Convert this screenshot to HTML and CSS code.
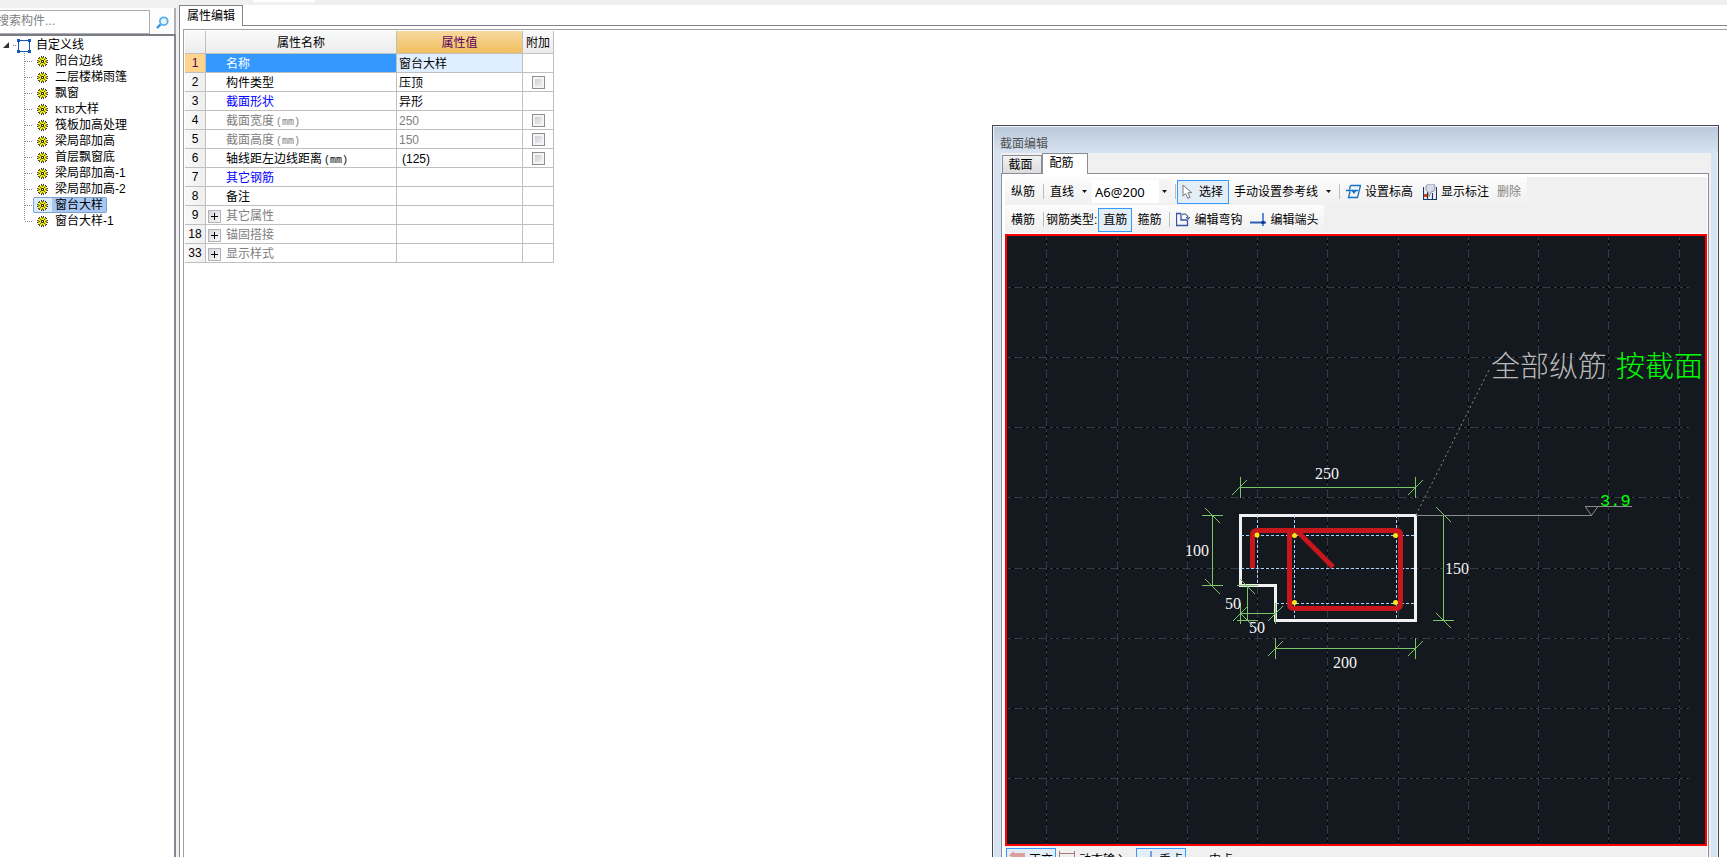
FILE: index.html
```
<!DOCTYPE html>
<html lang="zh-CN">
<head>
<meta charset="utf-8">
<title>属性编辑</title>
<link rel="stylesheet" href="styles.css">
</head>
<body>
<svg class="defs" aria-hidden="true">
  <symbol id="gear" viewBox="0 0 11 11">
    <path d="M4 0h1v1h1V0h1v2h1V1h1v1h1v1H9v1h2v1h-1v1h1v1H9v1h1v1H9v1H8V9H7v2H6v-1H5v1H4V9H3v1H2V9H1V8h1V7H0V6h1V5H0V4h2V3H1V2h1V1h1v1h1z" fill="#333"/>
    <circle cx="5.5" cy="5.5" r="4.100" fill="#ffef00"/>
    <path d="M5 2h1v1H5zM5 8h1v1H5zM2 5h1v1H2zM8 5h1v1H8zM3 3h1v1H3zM7 3h1v1H7zM3 7h1v1H3zM7 7h1v1H7z" fill="#6d6400"/>
    <path d="M4 4h3v3H4z" fill="#333"/><path d="M5 5h1v1H5z" fill="#fff"/>
  </symbol>
  <symbol id="down" viewBox="0 0 5 3"><path d="M0 0h5L2.5 3z" fill="#111"/></symbol>
</svg>
<main class="app">
  <div class="strip"><span class="strip-field"></span></div>
  <aside class="side">
    <form class="search">
      <input class="search-box" type="text" placeholder="搜索构件..." aria-label="搜索构件">
      <button class="search-btn" type="button" aria-label="搜索">
        <svg width="13" height="13" viewBox="0 0 13 13"><path d="M1 12l4-4" stroke="#3d93dc" stroke-width="2.4"/><circle cx="7.8" cy="5.2" r="3.9" fill="#e4f5ff" stroke="#58aeea" stroke-width="1.8"/></svg>
      </button>
    </form>
    <div class="tree">
      <div class="root">
        <svg width="32" height="16" viewBox="0 0 32 16"><path d="M3 11h6V5z" fill="#333"/><path d="M13 8.5h4" stroke="#888" stroke-dasharray="1 1"/><rect x="18.500" y="3.500" width="11" height="11" fill="#fff" stroke="#1757b5"/><path d="M17 2h3v3h-3zM28 2h3v3h-3zM17 13h3v3h-3zM28 13h3v3h-3z" fill="#1757b5"/></svg>
        <span>自定义线</span>
      </div>
      <ul class="branch">
        <li><svg class="gear"><use href="#gear"/></svg><span class="leaf">阳台边线</span></li>
        <li><svg class="gear"><use href="#gear"/></svg><span class="leaf">二层楼梯雨篷</span></li>
        <li><svg class="gear"><use href="#gear"/></svg><span class="leaf">飘窗</span></li>
        <li><svg class="gear"><use href="#gear"/></svg><span class="leaf"><span class="latin">KTB</span>大样</span></li>
        <li><svg class="gear"><use href="#gear"/></svg><span class="leaf">筏板加高处理</span></li>
        <li><svg class="gear"><use href="#gear"/></svg><span class="leaf">梁局部加高</span></li>
        <li><svg class="gear"><use href="#gear"/></svg><span class="leaf">首层飘窗底</span></li>
        <li><svg class="gear"><use href="#gear"/></svg><span class="leaf">梁局部加高-1</span></li>
        <li><svg class="gear"><use href="#gear"/></svg><span class="leaf">梁局部加高-2</span></li>
        <li><span class="picked"><svg class="gear"><use href="#gear"/></svg><span class="leaf">窗台大样</span></span></li>
        <li><svg class="gear"><use href="#gear"/></svg><span class="leaf">窗台大样-1</span></li>
      </ul>
    </div>
  </aside>
  <section class="props">
    <div class="tabs"><button class="tab" type="button">属性编辑</button></div>
    <div class="frame">
      <table class="grid">
        <colgroup><col class="c-num"><col class="c-name"><col class="c-value"><col class="c-extra"></colgroup>
        <thead><tr><th></th><th>属性名称</th><th class="hot">属性值</th><th>附加</th></tr></thead>
        <tbody>
          <tr class="current"><th>1</th><td>名称</td><td>窗台大样</td><td></td></tr>
          <tr><th>2</th><td>构件类型</td><td>压顶</td><td><input type="checkbox" aria-label="附加 构件类型"></td></tr>
          <tr class="key"><th>3</th><td>截面形状</td><td>异形</td><td></td></tr>
          <tr class="dim"><th>4</th><td>截面宽度<span class="unit">(mm)</span></td><td>250</td><td><input type="checkbox" aria-label="附加 截面宽度"></td></tr>
          <tr class="dim"><th>5</th><td>截面高度<span class="unit">(mm)</span></td><td>150</td><td><input type="checkbox" aria-label="附加 截面高度"></td></tr>
          <tr><th>6</th><td>轴线距左边线距离<span class="unit">(mm)</span></td><td class="inset">(125)</td><td><input type="checkbox" aria-label="附加 轴线距左边线距离"></td></tr>
          <tr class="key"><th>7</th><td>其它钢筋</td><td></td><td></td></tr>
          <tr><th>8</th><td>备注</td><td></td><td></td></tr>
          <tr class="dim group"><th>9</th><td><button class="plus" type="button" aria-label="展开 其它属性"></button>其它属性</td><td></td><td></td></tr>
          <tr class="dim group"><th>18</th><td><button class="plus" type="button" aria-label="展开 锚固搭接"></button>锚固搭接</td><td></td><td></td></tr>
          <tr class="dim group"><th>33</th><td><button class="plus" type="button" aria-label="展开 显示样式"></button>显示样式</td><td></td><td></td></tr>
        </tbody>
      </table>
    </div>
  </section>

  <section class="window">
    <h2 class="title">截面编辑</h2>
    <div class="client">
      <div class="wtabs"><button class="wtab" type="button">截面</button><button class="wtab on" type="button">配筋</button></div>
      <div class="pane">
        <div class="bars">
          <div class="bar">
            <button class="tool" type="button">纵筋</button><i class="sep"></i>
            <button class="tool drop" type="button">直线<svg class="down"><use href="#down"/></svg></button>
            <span class="combo"><select aria-label="钢筋信息"><option>A6@200</option></select><svg class="down"><use href="#down"/></svg></span><i class="sep"></i>
            <button class="tool on pick" type="button"><svg width="11" height="16" viewBox="0 0 11 16"><path d="M1 1v11l2.700-2.500 2 4.800 2.300-1-2-4.600h3.700z" fill="#fff" stroke="#777"/></svg>选择</button>
            <button class="tool drop" type="button">手动设置参考线<svg class="down"><use href="#down"/></svg></button><i class="sep"></i>
            <button class="tool" type="button"><svg width="15" height="15" viewBox="0 0 15 15"><path d="M4.500 1.500h10l-3 12h-9l1.500-6M4.500 1.500l-1 4M0 6.500h12" fill="none" stroke="#1272c4" stroke-width="1.300"/><path d="M5 6h6l-3 4z" fill="#1272c4"/></svg>设置标高</button>
            <button class="tool" type="button"><svg width="14" height="16" viewBox="0 0 14 16"><path d="M.5 3v12.500h4V6M13.500 3v12.500h-4V9M4.500 15.500h5" fill="none" stroke="#17386b" stroke-width="1.200"/><path d="M3 2l3-2h5l1 2-1 5-3 1-2 5-1-5-2-2z" fill="#d5dce8" stroke="#8b99b0"/><path d="M1 10h3v3H1z" fill="#e23c0c"/></svg>显示标注</button>
            <button class="tool" type="button" disabled>删除</button>
          </div>
          <div class="bar">
            <button class="tool" type="button">横筋</button><i class="sep"></i>
            <span class="caption">钢筋类型:</span>
            <button class="tool on" type="button">直筋</button>
            <button class="tool" type="button">箍筋</button><i class="sep"></i>
            <button class="tool" type="button"><svg width="14" height="15" viewBox="0 0 14 15"><path d="M5 1.500H.5v12h11V8M5 1.500V8h6" fill="none" stroke="#3556a4" stroke-width="1.300"/><path d="M6 2.500c3-1.500 6 0 6 4M10 5l2 2.500L14 5" fill="none" stroke="#223a7c"/></svg>编辑弯钩</button>
            <button class="tool tight" type="button"><svg width="16" height="15" viewBox="0 0 16 15"><path d="M0 10.500h16" stroke="#2f5cb0" stroke-width="2"/><path d="M13 1v13" stroke="#5b8ad8" stroke-width="2"/><path d="M11.500 9h3v3h-3z" fill="#123a94"/></svg>编辑端头</button>
          </div>
        </div>
        <div class="canvas">
          <svg role="img" aria-label="截面配筋图">
            <g transform="translate(-1007 -236)">
            <g class="base">
              <path d="M1046.500 237v607M1117.500 237v607M1187.500 237v607M1257.500 237v607M1327.500 237v607M1398.500 237v607M1468.500 237v607M1538.500 237v607M1608.500 237v607M1679.500 237v607"/>
              <path d="M1008 287.500h681M1008 357.500h681M1008 427.500h681M1008 497.500h681M1008 568.500h681M1008 638.500h681M1008 708.500h681M1008 778.500h681"/>
            </g>
            <g class="dash">
              <path class="vert" d="M1046.500 237v607M1117.500 237v607M1187.500 237v607M1257.500 237v607M1327.500 237v607M1398.500 237v607M1468.500 237v607M1538.500 237v607M1608.500 237v607M1679.500 237v607"/>
              <path class="horz" d="M1008 287.500h681M1008 357.500h681M1008 427.500h681M1008 497.500h681M1008 568.500h681M1008 638.500h681M1008 708.500h681M1008 778.500h681"/>
            </g>
            <path class="outline" d="M1240.500 515.500h175v105h-140v-35h-35z"/>
            <g class="axes">
              <path d="M1257.500 515v70M1294.500 515v105M1396.500 515v105M1241 535.500h174M1241 568.500h174M1276 603.500h139"/>
            </g>
            <path class="rebar" d="M1252.500 568V535q0-4.500 5-4.500H1396q4.500 0 4.500 4.500V604q0 4.500-4.500 4.500H1294q-4.500 0-4.500-4.500V531M1298 532l35 35"/>
            <g class="bars-dots">
              <circle cx="1257" cy="535" r="2.500"/><circle cx="1294.500" cy="535.500" r="2.500"/><circle cx="1395.500" cy="535.500" r="2.500"/><circle cx="1294.500" cy="602.500" r="2.500"/><circle cx="1395.500" cy="602.500" r="2.500"/>
            </g>
            <g class="measure">
              <path d="M1240.500 487.500h175M1240.500 477v21M1415.500 477v21M1232 495l15-15M1408 495l15-15"/>
              <path d="M1212.500 515.500v70M1202 515.500h21M1202 585.500h21M1205 508l15 15M1205 579l15 15"/>
              <path d="M1443.500 515.500v105M1433 620.500h21M1436 507l15 15M1436 613l15 15"/>
              <path d="M1275.500 648.500h140M1275.500 638v21M1415.500 638v21M1268 656l15-15M1408 656l15-15"/>
              <path d="M1247.500 585.500v35M1237 585.500h21M1237 620.500h21M1240 579l15 15M1240 613l15 15"/>
              <path d="M1240.500 613.500h35M1240.500 603v21M1275.500 603v21M1233 621l15-15M1268 621l15-15"/>
            </g>
            <g class="level">
              <path class="leader" d="M1416 515l74-147"/>
              <path d="M1416 515.500h176M1585 506.500h47M1585.500 507l6 8.500 6-8.500"/>
            </g>
            <g class="numbers">
              <text x="1315" y="479">250</text><text x="1185" y="556">100</text><text x="1445" y="574">150</text><text x="1225" y="609">50</text><text x="1249" y="633">50</text><text x="1333" y="668">200</text>
            </g>
            <text class="elev" x="1600" y="506">3.9</text>
            <text class="note" x="1491" y="377">全部纵筋</text>
            <text class="note green" x="1616" y="377">按截面</text>
            </g>
          </svg>
        </div>
        <div class="bar foot">
          <button class="tool on" type="button"><svg width="16" height="14" viewBox="0 0 16 14"><path d="M0 4l5-4v2h11v4H5v2z" fill="#dca0a0"/></svg>正交</button>
          <button class="tool" type="button"><svg width="16" height="14" viewBox="0 0 16 14"><path d="M.5 0v7M15.500 0v7M0 2.500h16" stroke="#a87878"/></svg>动态输入</button>
          <button class="tool on gap" type="button"><svg width="16" height="16" viewBox="0 0 16 16"><path d="M12 0v13" stroke="#7f9fdc" stroke-width="2"/><path d="M2 12h13" stroke="#7f9fdc" stroke-width="2"/></svg>垂点</button>
          <button class="tool" type="button"><svg width="16" height="14" viewBox="0 0 16 14"><path d="M1 11h14" stroke="#7f9fdc" stroke-width="2"/></svg>中点</button>
        </div>
      </div>
    </div>
  </section>
</main>
</body>
</html>
```
FILE: styles.css
```
* { box-sizing: border-box; }
html, body { height: 100%; }
body {
  margin: 0;
  overflow: hidden;
  background: #fff;
  color: #000;
  font: 12px/16px "Liberation Sans", "Noto Sans CJK SC", sans-serif;
}
button, input, select { font: inherit; color: inherit; margin: 0; }
button { padding: 0; border: 0; background: none; white-space: nowrap; }
.defs { position: absolute; width: 0; height: 0; }

.app {
  position: relative;
  height: 100%;
  display: grid;
  grid-template: 5px 1fr / 179px 1fr;
  background: #f0f0f0;
  overflow: hidden;
}
.strip { grid-column: 1 / 3; padding-left: 253px; }
.strip-field { display: block; width: 62px; height: 2px; background: #fff; }

/* component tree */
.side {
  display: flex;
  flex-direction: column;
  width: 176px;
  padding-top: 3px;
}
.search {
  display: flex;
  height: 26px;
  padding-top: 2px;
  background: #fcfcfc;
  border-right: 2px solid #b0b0b4;
}
.search-box {
  width: 158px;
  height: 24px;
  margin-left: -8px;
  padding: 0 4px 2px;
  border: 1px solid #abadb3;
  background: #fff;
}
.search-box::placeholder { color: #808080; opacity: 1; }
.search-btn { flex: 1; display: grid; place-items: center; }
.tree {
  flex: 1;
  padding-top: 1px;
  background: #fff;
  border-top: 2px solid #7c7c84;
  border-right: 2px solid #828790;
}
.root { display: flex; align-items: center; gap: 4px; height: 16px; }
.branch {
  list-style: none;
  margin: 0;
  padding: 0;
  background: linear-gradient(#909090 50%, transparent 50%) 24px 0 / 1px 2px repeat-y;
  height: 168px;
}
.branch li {
  display: flex;
  align-items: center;
  height: 16px;
  padding-left: 33px;
  background: repeating-linear-gradient(90deg, #909090 0 1px, transparent 1px 2px) 25px 8px / 8px 1px no-repeat;
}
.gear { width: 11px; height: 11px; margin: 0 4px; flex: none; }
.leaf { padding: 0 3px; white-space: nowrap; }
.latin { font: 10px/12px "Liberation Serif", serif; }
.picked {
  display: flex;
  align-items: center;
  height: 16px;
  border-radius: 2px;
  background: #dcebfc;
  box-shadow: inset 0 0 0 1px #7da2ce;
}
.picked .leaf { background: #a8c8f4; line-height: 14px; margin-right: 1px; }

/* property table */
.props {
  display: flex;
  flex-direction: column;
  background: #fff;
  border-left: 1px solid #82828c;
}
.tabs { display: flex; height: 21px; border-bottom: 1px solid #82828c; }
.tab {
  width: 63px;
  height: 21px;
  padding-bottom: 1px;
  background: #fff;
  border: solid #82828c;
  border-width: 1px 1px 0 0;
}
.frame {
  flex: 1;
  margin: 3px 0 0 3px;
  padding: 1px 0 0 1px;
  border: solid #a0a0a0;
  border-width: 1px 0 0 1px;
}
.grid { table-layout: fixed; width: 369px; border-collapse: separate; border-spacing: 0; }
.c-num { width: 21px; }
.c-name { width: 191px; }
.c-value { width: 126px; }
.c-extra { width: 31px; }
.grid th, .grid td {
  height: 19px;
  padding: 0 2px;
  line-height: 16px;
  border: solid #c0c0c0;
  border-width: 0 1px 1px 0;
  font-weight: 400;
  white-space: nowrap;
  text-align: left;
}
.grid td { padding-top: 2px; }
.grid thead th { height: 23px; padding: 1px 0 0; text-align: center; background: linear-gradient(#fafafa, #ececec); }
.grid thead .hot { background: linear-gradient(#f9d99f, #f0bf5e); color: #5b005b; }
.grid tbody th { padding: 0; text-align: center; background: linear-gradient(90deg, #fafafa, #efefef); }
.grid td:nth-child(2) { padding-left: 20px; }
.grid td:nth-child(3) { padding-top: 1px; }
.grid td:nth-child(4) { padding: 1px 0 0; text-align: center; }
.grid tbody .inset { padding-left: 5px; }
.grid .current th { background: #ffd58d; color: #5b005b; }
.current td:nth-child(2) { background: #3399ff; color: #fff; }
.current td:nth-child(3) { background: #e0efff; }
.key td:nth-child(2) { color: #00f; }
.dim td { color: #808080; }
.unit { font: 10px/12px "Liberation Mono", monospace; padding-left: 2px; }
.grid .group td:nth-child(2) { padding-left: 2px; padding-top: 1px; }
.grid input {
  appearance: none;
  display: block;
  width: 13px;
  height: 13px;
  margin: 0 auto;
  border: 1px solid #8e8f8f;
  background: linear-gradient(135deg, #c4c8d0, #f6f6f6);
  box-shadow: inset 0 0 0 2px #f4f4f4;
}
.plus {
  display: inline-block;
  width: 13px;
  height: 13px;
  margin-right: 5px;
  vertical-align: -2px;
  border: 1px solid #b4b4b4;
  background:
    linear-gradient(#000, #000) center / 7px 1px no-repeat,
    linear-gradient(#000, #000) center / 1px 7px no-repeat,
    linear-gradient(135deg, #d2d6de, #f8f8f8);
}

/* floating section editor */
.window {
  position: absolute;
  top: 125px;
  right: 8px;
  bottom: -18px;
  left: 992px;
  display: flex;
  flex-direction: column;
  padding: 1px 7px 0 8px;
  border: 1px solid #46464c;
  background: #d7e3f1;
  box-shadow: inset 1px 1px #eef4fb, inset -1px 0 #eef4fb;
}
.title {
  height: 26px;
  margin: 0 -7px;
  padding: 9px 6px 0;
  font-size: 12px;
  font-weight: 400;
  line-height: 16px;
  color: #505050;
  background: linear-gradient(#bac9da, #d7e3f1);
}
.client { flex: 1; display: flex; flex-direction: column; background: #f0f0f0; padding-right: 2px; }
.wtabs { display: flex; align-items: flex-end; height: 20px; }
.wtab {
  width: 40px;
  height: 18px;
  margin-left: 1px;
  padding: 1px 3px 0 0;
  border: 1px solid #8c8c96;
  border-bottom: 0;
  background: linear-gradient(#f2f2f2, #dcdcdc);
}
.wtab.on { position: relative; width: 46px; height: 21px; margin: 0 0 -1px; padding: 0 7px 2px 0; background: #fff; }
.pane {
  flex: 1;
  display: flex;
  flex-direction: column;
  padding: 3px 1px 0 3px;
  border: 1px solid #8c8c96;
  border-bottom: 0;
  background: #fff;
}
.bars { display: flex; flex-direction: column; align-items: flex-start; height: 57px; background: #f0f0f0; border-bottom: 1px solid #fff; }
.bar {
  display: flex;
  align-items: center;
  height: 28px;
  padding: 1px 1px 0;
  background: linear-gradient(#fcfcfc, #f0f0f0);
}
.tool {
  display: flex;
  align-items: center;
  gap: 4px;
  height: 24px;
  padding: 0 4px;
  border: 1px solid transparent;
}
.tool.on { border-color: #3399ff; background: #e4eef9; }
.tool.drop { gap: 8px; }
.tool.pick { gap: 6px; padding-right: 5px; }
.tool.tight { padding-left: 2px; }
.tool:disabled { color: #838383; padding-left: 2px; }
.sep { width: 1px; height: 15px; margin: 0 1px 0 3px; background: #bdbdbd; }
.caption { padding: 0 1px; white-space: nowrap; }
.down { width: 5px; height: 3px; flex: none; }
.combo {
  display: flex;
  align-items: center;
  width: 79px;
  height: 23px;
  margin-right: 1px;
  padding-right: 4px;
  background: linear-gradient(90deg, #fff 67px, #f4f4f4 67px);
}
.combo select {
  flex: 1;
  min-width: 0;
  appearance: none;
  border: 0;
  padding: 0 3px;
  background: transparent;
  font: 13px/18px "Noto Sans", sans-serif;
}
.canvas { flex: 1; min-height: 0; border: 2px solid #f00; background: #14181f; }
.canvas svg { display: block; width: 100%; height: 100%; }
.canvas path { fill: none; }
.base { stroke: #343a46; }
.dash { stroke: #000; stroke-dasharray: 3 3 3 3 3 9; }
.vert { stroke-dashoffset: 3; }
.horz { stroke-dashoffset: 9; }
.canvas .outline { stroke: #f2f2f2; stroke-width: 3; }
.axes { stroke: #a8d4ff; stroke-dasharray: 3 2; }
.canvas .rebar { stroke: #c8161d; stroke-width: 5; }
.bars-dots { fill: #ffe21a; }
.measure { stroke: #7cc468; }
.level { stroke: #8c8c8c; }
.leader { stroke-dasharray: 2 3; }
.numbers { fill: #f4f4f4; font: 16px "Liberation Serif", serif; }
.elev { fill: #0f0; font: 17px "Liberation Mono", monospace; }
.note { fill: #b8b8b8; font: 300 29px "Noto Sans CJK SC", sans-serif; }
.note.green { fill: #0f0; }
.foot { flex: none; align-items: flex-start; height: 28px; padding-top: 2px; background: #f0f0f0; }
.foot .tool { padding: 0 2px; }
.foot .tool svg { align-self: flex-start; margin-top: 2px; }
.foot .gap { margin-left: 6px; }
```
